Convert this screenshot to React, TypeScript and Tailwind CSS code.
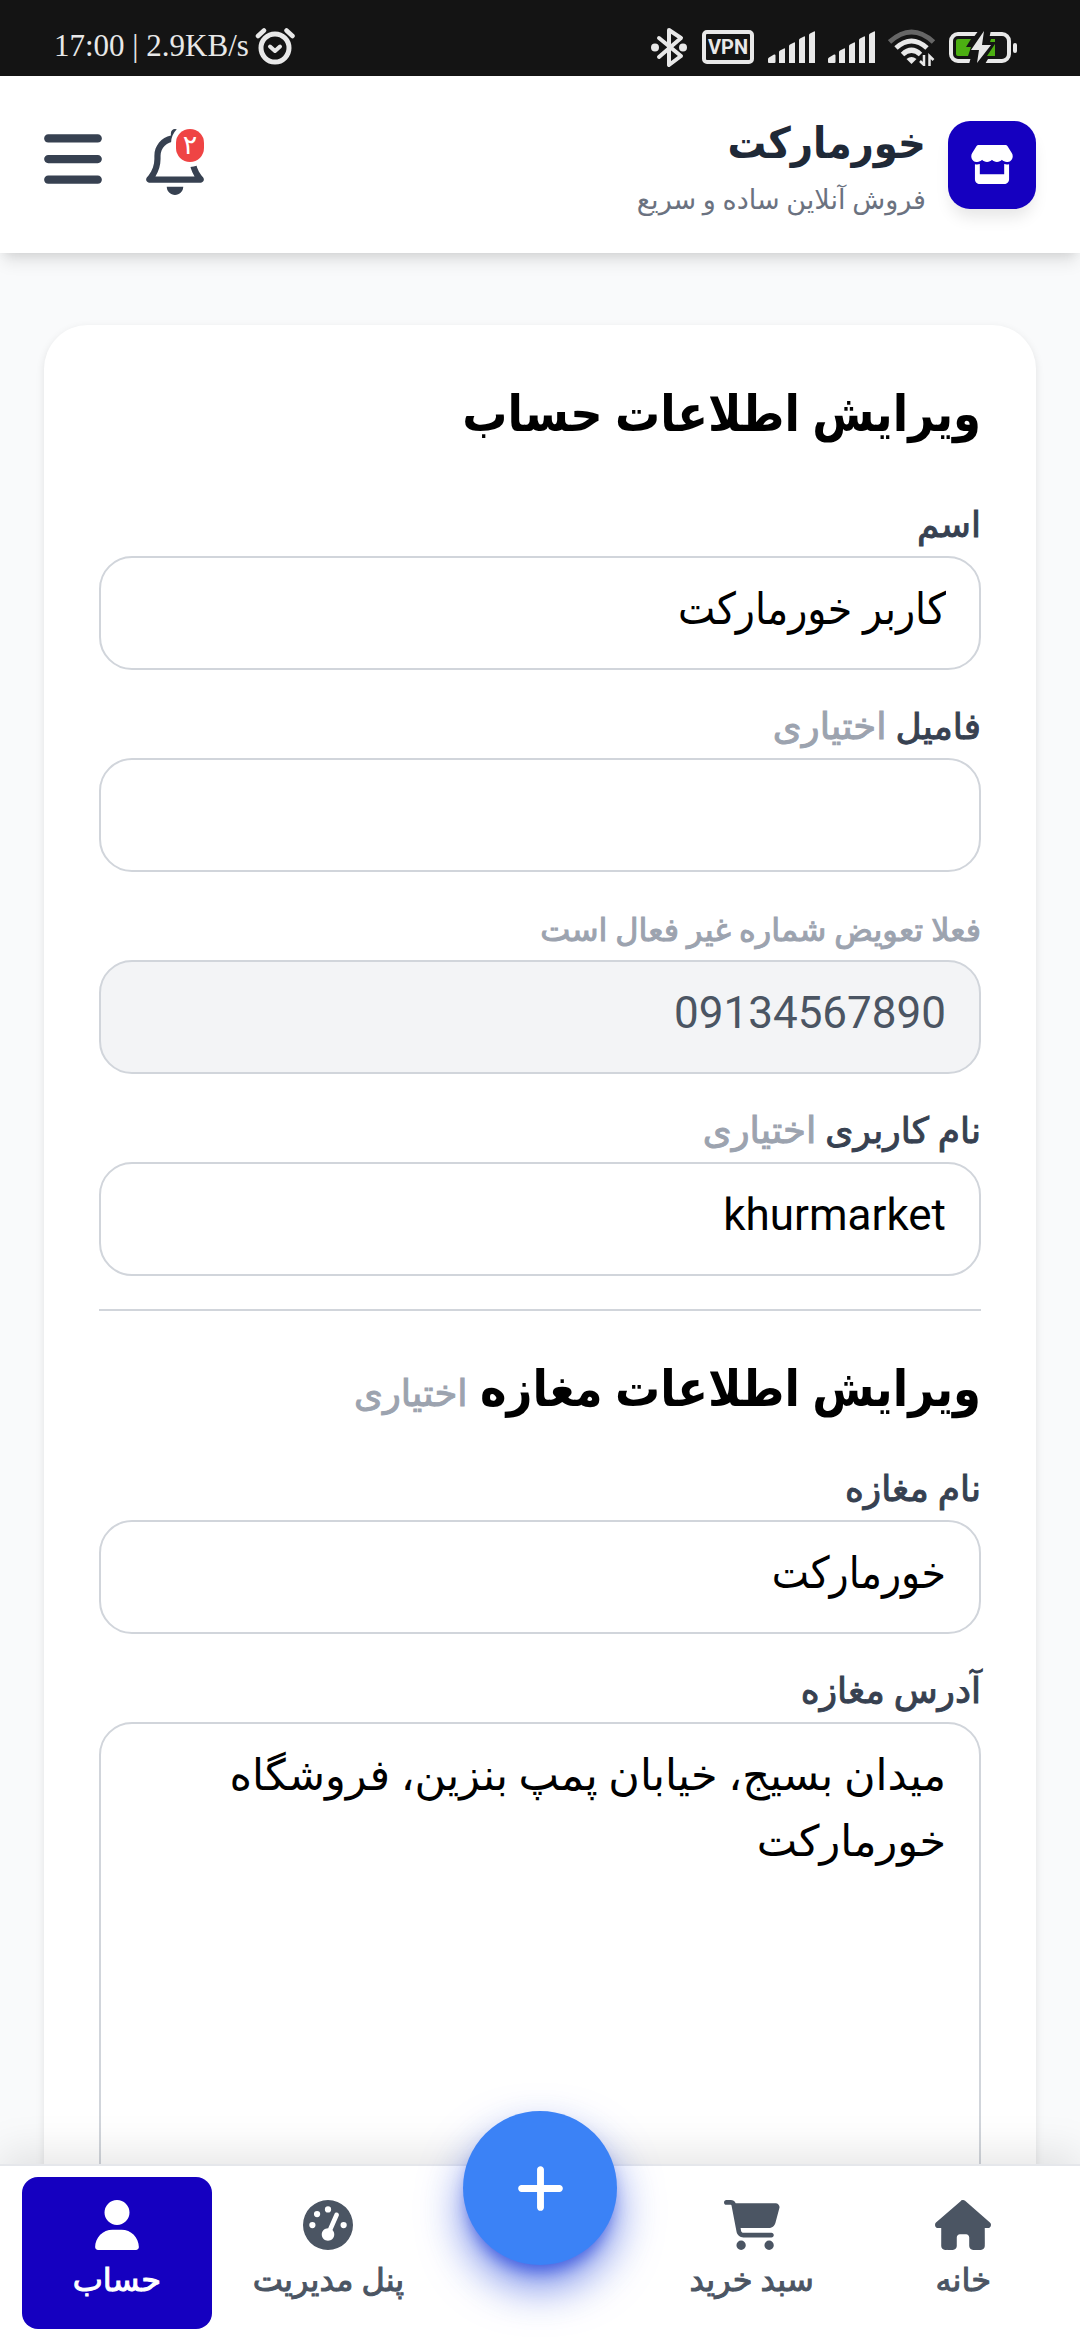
import { useState } from 'react'
import type { ReactNode } from 'react'
import { FaBars, FaCartShopping, FaGaugeHigh, FaHouse, FaPlus, FaRegBell, FaStore, FaUser } from 'react-icons/fa6'

const BOX_CLASS =
  'block w-full rounded-[33px] border-2 border-[#d1d5db] px-[33px] pt-[18px] pb-[26px] leading-[66px] outline-none'
const INPUT_CLASS = `${BOX_CLASS} text-[44px] font-['Roboto','DejaVu_Sans_Condensed','DejaVu_Sans',sans-serif]`

const NAV_ITEMS = [
  { label: 'خانه', icon: <FaHouse className="w-[56px] h-[50px]" /> },
  { label: 'سبد خرید', icon: <FaCartShopping className="w-[56px] h-[50px]" /> },
  null,
  { label: 'پنل مدیریت', icon: <FaGaugeHigh className="w-[50px] h-[50px]" /> },
  { label: 'حساب', icon: <FaUser className="w-[44px] h-[50px]" />, active: true },
]

function SignalIcon() {
  return (
    <svg width="48" height="32" viewBox="0 0 48 32" fill="currentColor">
      <path d="M0 31v-3q0-1 1-1.500l5-3q1.500-.500 1.500 1V31q0 1-1 1H1q-1 0-1-1zM11 32V21q0-1 1-1.500l4-2q1-.500 1 .500v14zM21 32V15q0-1 1-1.500l4-2q1-.500 1 .500v20zM31 32V9q0-1 1-1.500l4-2q1-.500 1 .500v26zM41 32V4q0-1 1-1.500l4-2q1-.500 1 .500v31z" />
    </svg>
  )
}

function StatusBar() {
  return (
    <div dir="ltr" className="flex h-[76px] shrink-0 items-start justify-between bg-[#141414] pr-[62px] pl-[54px] text-[#e8e8e8]">
      <div className="flex items-center gap-[6px] pt-[26px]">
        <span className="font-['Liberation_Serif',serif] text-[31px] leading-[40px]">17:00 | 2.9KB/s</span>
        <svg width="41" height="40" viewBox="0 0 41 40" fill="none" stroke="currentColor" strokeLinecap="round">
          <circle cx="20" cy="22" r="14" strokeWidth="5" />
          <path d="M3 10 9 4.500M37.500 10 31.500 4.500" strokeWidth="4.500" />
          <path d="M15 20.500l5 4.500 5-4.500" strokeWidth="4" strokeLinejoin="round" />
        </svg>
      </div>
      <div className="flex items-center pt-[26px]">
        <svg width="38" height="42" viewBox="0 0 38 42" fill="none" stroke="currentColor" strokeWidth="4" strokeLinejoin="round" strokeLinecap="round">
          <path d="M8 12l22 18-12 9V4l12 8L8 31" />
          <circle cx="4" cy="21.500" r="2" />
          <circle cx="32" cy="21.500" r="2" />
        </svg>
        <span className="ml-[13px] flex h-[34px] w-[52px] items-center justify-center rounded-[5px] border-4 border-[#e8e8e8] font-['Roboto',sans-serif] text-[20px] leading-none font-bold">
          VPN
        </span>
        <span className="ml-[14px]"><SignalIcon /></span>
        <span className="ml-[12px]"><SignalIcon /></span>
        <svg className="ml-[12px]" width="48" height="38" viewBox="0 0 48 38" fill="none" stroke="currentColor" strokeWidth="5">
          <path d="M1.500 14q22-20 44 0" stroke="#666" />
          <path d="M8 20q15.500-14 31 0" />
          <path d="M14.500 26.500q9-8.500 18 0" />
          <path d="M23.500 36l-5-5q5-4 10 0z" fill="currentColor" stroke="none" />
          <path d="M36 27v10l-4-4M41.500 38V28l4 4" strokeWidth="2.500" />
        </svg>
        <svg className="ml-[13px]" width="69" height="34" viewBox="0 0 69 34">
          <rect x="2" y="4" width="58" height="27" rx="7" fill="none" stroke="currentColor" strokeWidth="4" />
          <path d="M30 0 15 20h9l-4 14h16l12-20h-9l3-14z" fill="#141414" />
          <path d="M35 1 22 20h8l-2 13 14-18h-9z" fill="currentColor" />
          <path d="M7 11q0-2 2-2h13l-5 8h5l-3 9H9q-2 0-2-2zM46 9h-4l-1 3h5zM46 14v12h-8l8-12z" fill="#4caf12" />
          <rect x="64" y="13" width="4" height="10" rx="2" fill="currentColor" />
        </svg>
      </div>
    </div>
  )
}

function Header() {
  return (
    <header className="relative z-10 flex h-[177px] shrink-0 items-center justify-between bg-white px-[44px] shadow-[0_11px_16px_-3px_rgba(0,0,0,0.1),0_5px_11px_-5px_rgba(0,0,0,0.1)]">
      <div className="flex items-center gap-[22px]">
        <div className="flex size-[88px] items-center justify-center rounded-[22px] bg-[#1500c0] text-white shadow-[0_11px_16px_-3px_rgba(0,0,0,0.1)]">
          <FaStore className="h-[39px] w-[44px]" />
        </div>
        <div className="pt-[6px]">
          <h1 className="font-['DejaVu_Sans_Condensed','DejaVu_Sans',sans-serif] text-[43px] leading-[58px] font-bold text-[#1f2937]">
            خورمارکت
          </h1>
          <p className="pt-[6px] text-[27px] leading-[44px] text-[#6b7280]">فروش آنلاین ساده و سریع</p>
        </div>
      </div>
      <div className="flex items-center gap-[44px] pb-[6px] text-[#374151]">
        <button type="button" aria-label="اعلان‌ها" className="relative">
          <FaRegBell className="h-[66px] w-[58px]" />
          <span className="absolute top-0 right-0 flex h-[33px] w-[28px] items-center justify-center rounded-full bg-[#ef4444] text-[27px] leading-none text-white ring-[5px] ring-white">
            ۲
          </span>
        </button>
        <button type="button" aria-label="منو" className="pb-[6px]">
          <FaBars className="h-[66px] w-[58px]" />
        </button>
      </div>
    </header>
  )
}

function Field({ id, label, children }: { id: string; label: ReactNode; children: ReactNode }) {
  return (
    <div>
      <label htmlFor={id} className="block pb-[6px] text-[36px] leading-[49px] font-medium text-[#374151] [-webkit-text-stroke:1px]">
        {label}
      </label>
      {children}
    </div>
  )
}

const Optional = () => (
  <span className="font-['Roboto','DejaVu_Sans',sans-serif] text-[37px] leading-none font-medium text-[#9ca3af] [-webkit-text-stroke:1px]">
    اختیاری
  </span>
)

function SectionTitle({ children }: { children: ReactNode }) {
  return (
    <h2 className="pb-[8px] font-['Roboto','DejaVu_Sans_Condensed','DejaVu_Sans',sans-serif] text-[50px] leading-[69px] font-bold">
      {children}
    </h2>
  )
}

export default function App() {
  const [form, setForm] = useState({
    name: 'کاربر خورمارکت',
    family: '',
    username: 'khurmarket',
    shopName: 'خورمارکت',
    address: 'میدان بسیج، خیابان پمپ بنزین، فروشگاه خورمارکت',
  })

  const update = (key: keyof typeof form, value: string) => setForm({ ...form, [key]: value })

  return (
    <div dir="rtl" className="flex h-screen flex-col overflow-hidden bg-[#f9fafb] font-['Roboto','DejaVu_Sans',sans-serif] text-black">
      <StatusBar />
      <Header />

      <main className="min-h-0 flex-1 overflow-y-auto px-[44px] pt-[72px] [scrollbar-width:none]">
        <form className="rounded-[44px] bg-white p-[55px] shadow-[0_3px_8px_rgba(0,0,0,0.1)]">
          <SectionTitle>ویرایش اطلاعات حساب</SectionTitle>
          <div className="mt-[44px] space-y-[33px]">
            <Field id="name" label="اسم">
              <input id="name" value={form.name} onChange={(e) => update('name', e.target.value)} className={INPUT_CLASS} />
            </Field>
            <Field id="family" label={<>فامیل <Optional /></>}>
              <input id="family" value={form.family} onChange={(e) => update('family', e.target.value)} className={INPUT_CLASS} />
            </Field>
            <Field id="phone" label={<span className="text-[32px] leading-none text-[#9ca3af]">فعلا تعویض شماره غیر فعال است</span>}>
              <input id="phone" value="09134567890" disabled className={`${INPUT_CLASS} bg-[#f3f4f6] text-[#4b5563]`} />
            </Field>
            <Field id="username" label={<>نام کاربری <Optional /></>}>
              <input id="username" value={form.username} onChange={(e) => update('username', e.target.value)} className={INPUT_CLASS} />
            </Field>
          </div>

          <hr className="mt-[33px] mb-[44px] border-t-2 border-[#d1d5db]" />

          <SectionTitle>
            ویرایش اطلاعات مغازه <Optional />
          </SectionTitle>
          <div className="mt-[33px] space-y-[33px]">
            <Field id="shopName" label="نام مغازه">
              <input id="shopName" value={form.shopName} onChange={(e) => update('shopName', e.target.value)} className={INPUT_CLASS} />
            </Field>
            <Field id="address" label="آدرس مغازه">
              <textarea
                id="address"
                rows={8}
                value={form.address}
                onChange={(e) => update('address', e.target.value)}
                className={`${BOX_CLASS} resize-none text-[43px]`}
              />
            </Field>
          </div>
        </form>
      </main>

      <nav className="relative z-10 grid shrink-0 grid-cols-5 border-t-2 border-[#e5e7eb] bg-white p-[11px] shadow-[0_-11px_40px_rgba(0,0,0,0.1)]">
        {NAV_ITEMS.map((item) =>
          item ? (
            <a
              key={item.label}
              href="#"
              className={`mx-[11px] flex h-[152px] flex-col items-center rounded-[16px] pt-[23px] text-[32px] leading-[44px] font-medium whitespace-nowrap [-webkit-text-stroke:1px] ${
                item.active ? 'bg-[#1500c0] text-white' : 'text-[#4b5563]'
              }`}
            >
              {item.icon}
              <span className="mt-[8px]">{item.label}</span>
            </a>
          ) : (
            <div key="add" className="flex justify-center">
              <button
                type="button"
                aria-label="افزودن"
                className="-mt-[66px] flex size-[154px] items-center justify-center rounded-full bg-[#3b82f6] text-white shadow-[0_22px_44px_rgba(21,60,220,0.6),0_12px_16px_-6px_rgba(21,50,210,0.6)]"
              >
                <FaPlus className="size-[55px]" />
              </button>
            </div>
          )
        )}
      </nav>
    </div>
  )
}
